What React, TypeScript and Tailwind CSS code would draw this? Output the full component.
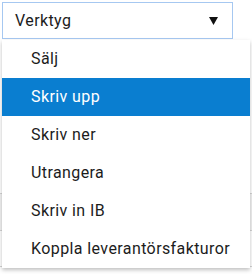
const items = ['Sälj', 'Skriv upp', 'Skriv ner', 'Utrangera', 'Skriv in IB', 'Koppla leverantörsfakturor']

const App = () => {
  return (
    <div className="relative h-[274px] w-[252px] overflow-hidden bg-white font-['Roboto',sans-serif] tracking-[0.4px] text-[#1c1c1c]">
      <div className="ml-[2px] mt-[2px] flex h-[37px] w-[231px] items-center justify-between border border-[#a6c8f1] pl-[12px] pr-[14px] text-[16px]">
        <span>Verktyg</span>
        <svg width="9" height="8" viewBox="0 0 9 8">
          <path d="M0 0 H9 L4.5 8 Z" fill="#111" />
        </svg>
      </div>
      <div className="mt-[154px] flex flex-col">
        <div className="h-[38px] border-y border-[#d4d4d4] bg-[#f2f2f2]" />
        <div className="h-[36px] border-b border-[#d4d4d4]" />
      </div>
      <div className="absolute left-[2px] top-[40px] w-[248px] bg-white shadow-[0_2px_4px_rgba(0,0,0,0.25)]">
        {items.map((item, i) => (
          <div
            key={item}
            className={`flex h-[38px] items-center pl-[29px] text-[16px] ${
              i === 1 ? 'bg-[#0a7ed0] text-white' : ''
            }`}
          >
            {item}
          </div>
        ))}
      </div>
    </div>
  )
}

export default App
